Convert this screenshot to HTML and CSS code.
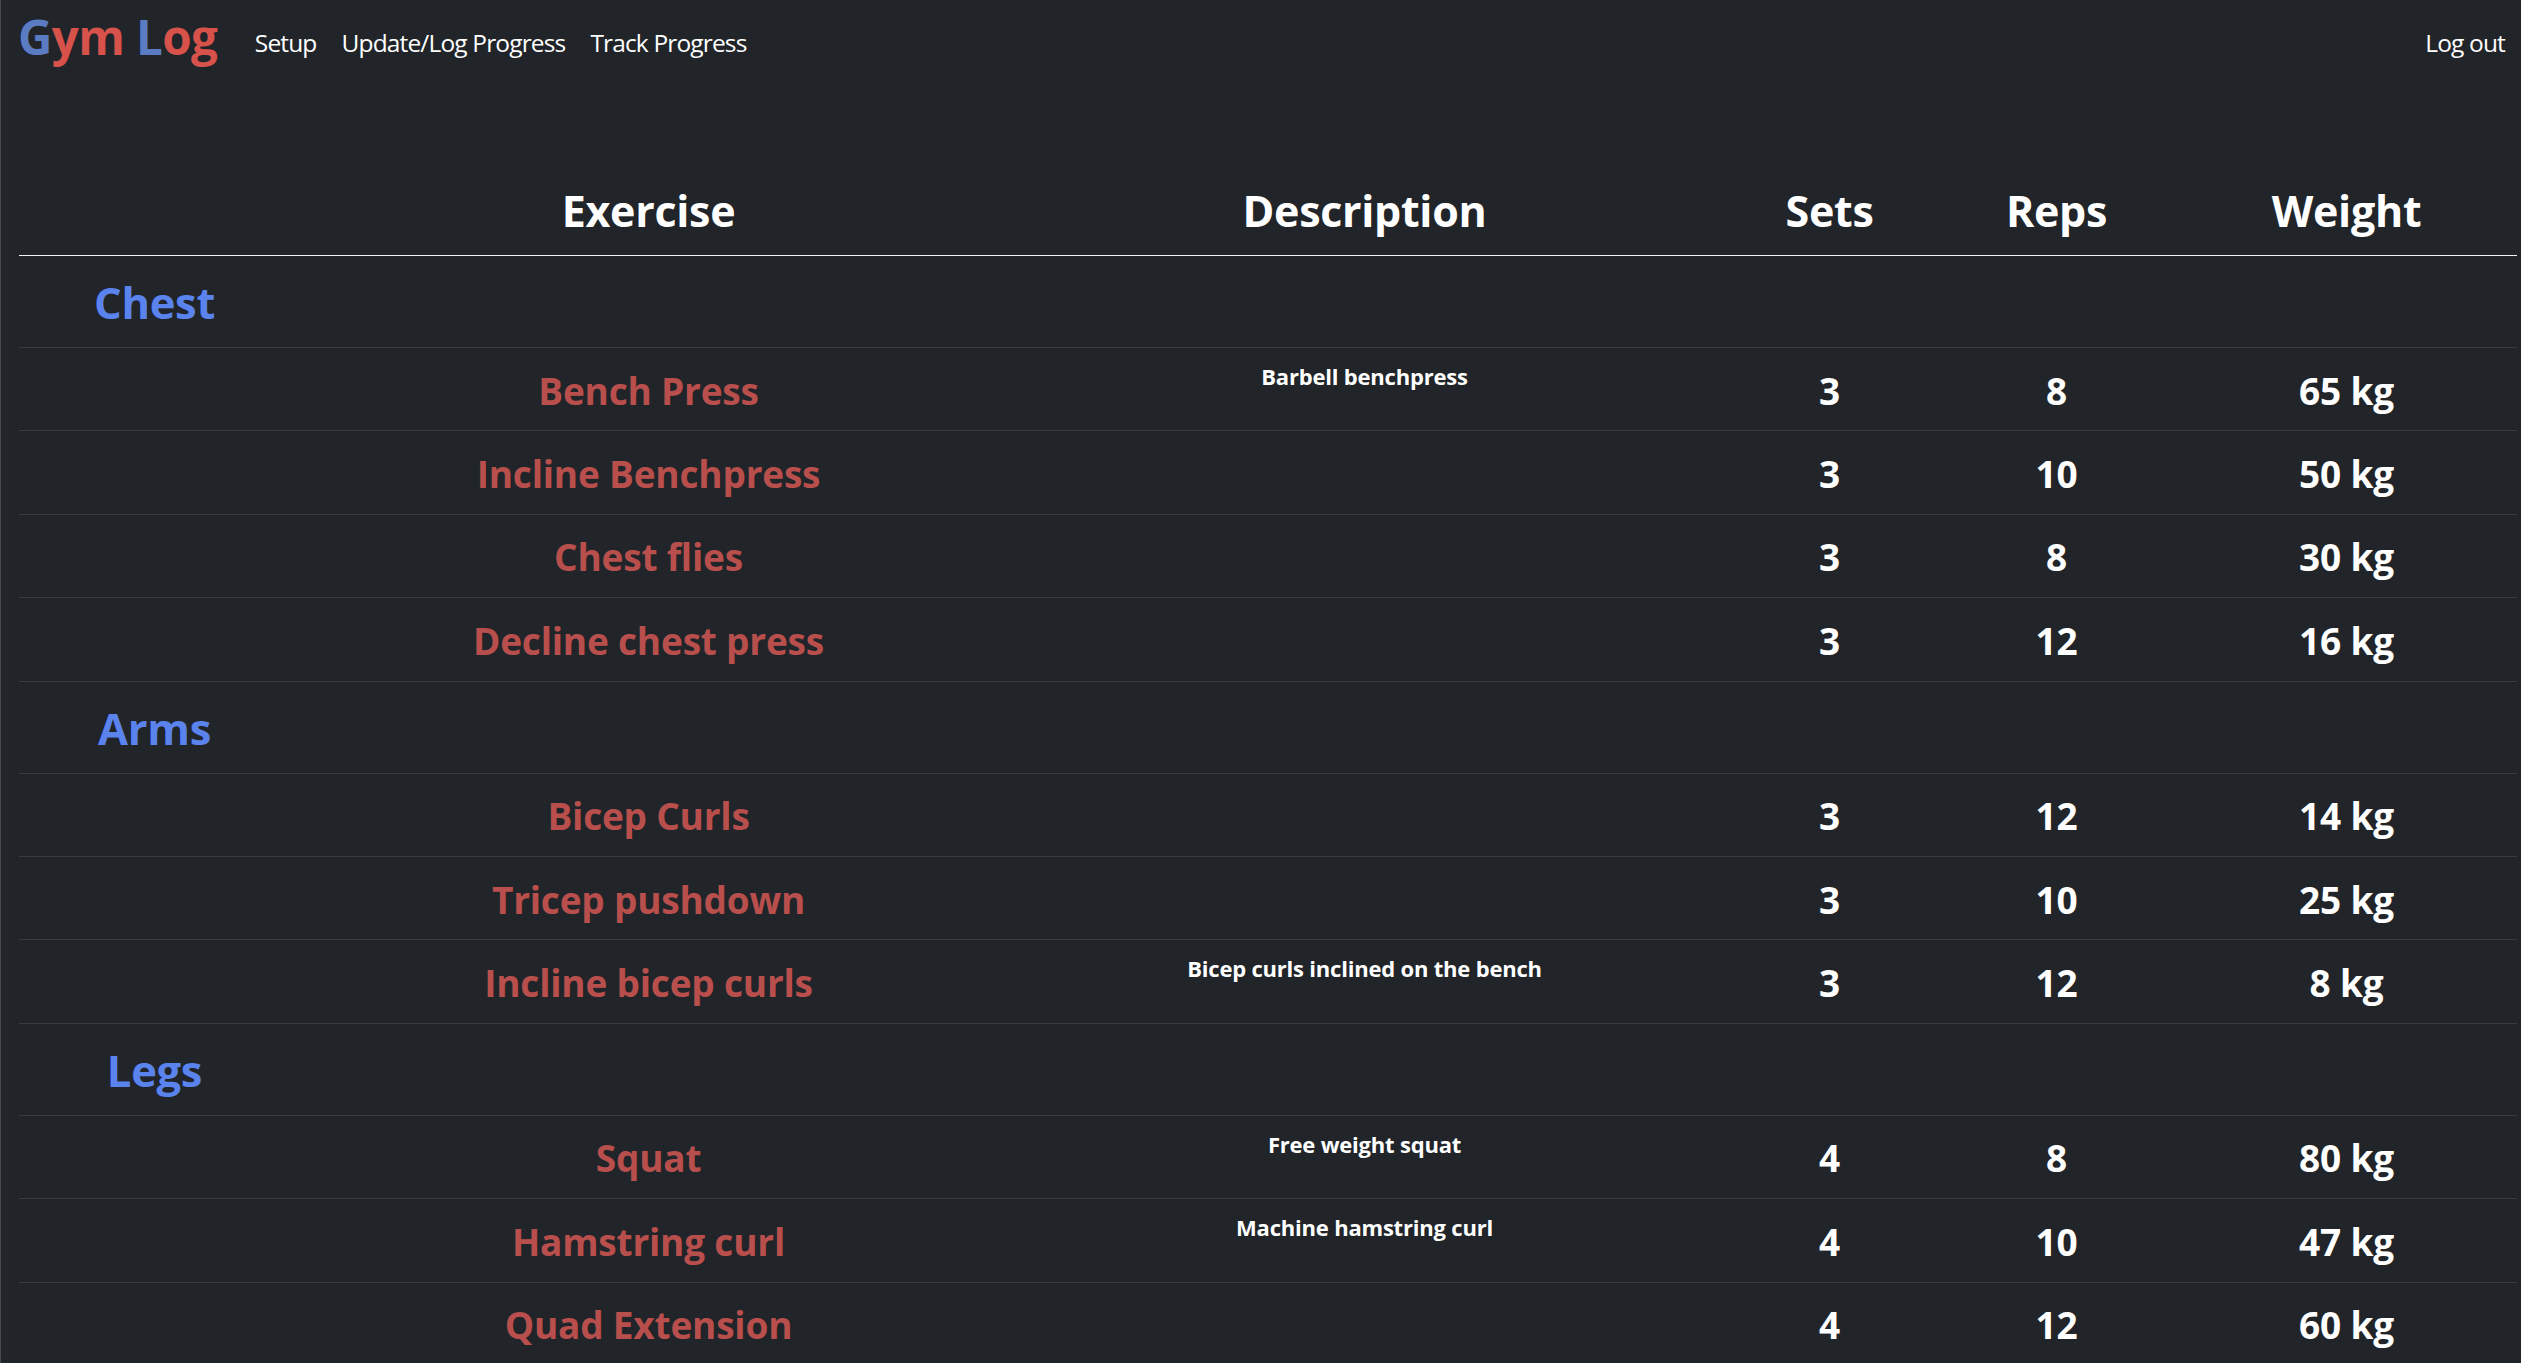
FILE: index.html
```html
<!DOCTYPE html>
<html lang="en">
<head>
<meta charset="utf-8">
<title>Gym Log</title>
<link rel="stylesheet" href="styles.css">
</head>
<body>
<div class="frame">
  <nav class="navbar">
    <a class="brand"><span class="blue">G</span><span class="red">ym</span> <span class="blue">L</span><span class="red">og</span></a>
    <ul class="links">
      <li><a class="link">Setup</a></li>
      <li><a class="link">Update/Log Progress</a></li>
      <li><a class="link">Track Progress</a></li>
    </ul>
    <a class="link logout">Log out</a>
  </nav>

  <main class="content">
    <table class="log">
      <colgroup>
        <col class="c-group"><col class="c-ex"><col class="c-desc"><col class="c-sets"><col class="c-reps"><col class="c-weight">
      </colgroup>
      <thead>
        <tr class="head"><th></th><th>Exercise</th><th>Description</th><th>Sets</th><th>Reps</th><th>Weight</th></tr>
      </thead>
      <tbody>
        <tr class="group"><th class="gname">Chest</th><td></td><td></td><td></td><td></td><td></td></tr>
        <tr class="item"><td></td><td class="ex">Bench Press</td><td class="desc">Barbell benchpress</td><td>3</td><td>8</td><td>65 kg</td></tr>
        <tr class="item"><td></td><td class="ex">Incline Benchpress</td><td class="desc"></td><td>3</td><td>10</td><td>50 kg</td></tr>
        <tr class="item"><td></td><td class="ex">Chest flies</td><td class="desc"></td><td>3</td><td>8</td><td>30 kg</td></tr>
        <tr class="item"><td></td><td class="ex">Decline chest press</td><td class="desc"></td><td>3</td><td>12</td><td>16 kg</td></tr>

        <tr class="group"><th class="gname">Arms</th><td></td><td></td><td></td><td></td><td></td></tr>
        <tr class="item"><td></td><td class="ex">Bicep Curls</td><td class="desc"></td><td>3</td><td>12</td><td>14 kg</td></tr>
        <tr class="item"><td></td><td class="ex">Tricep pushdown</td><td class="desc"></td><td>3</td><td>10</td><td>25 kg</td></tr>
        <tr class="item"><td></td><td class="ex">Incline bicep curls</td><td class="desc">Bicep curls inclined on the bench</td><td>3</td><td>12</td><td>8 kg</td></tr>

        <tr class="group"><th class="gname">Legs</th><td></td><td></td><td></td><td></td><td></td></tr>
        <tr class="item"><td></td><td class="ex">Squat</td><td class="desc">Free weight squat</td><td>4</td><td>8</td><td>80 kg</td></tr>
        <tr class="item"><td></td><td class="ex">Hamstring curl</td><td class="desc">Machine hamstring curl</td><td>4</td><td>10</td><td>47 kg</td></tr>
        <tr class="item"><td></td><td class="ex">Quad Extension</td><td class="desc"></td><td>4</td><td>12</td><td>60 kg</td></tr>
      </tbody>
    </table>
  </main>
</div>
</body>
</html>
```

FILE: styles.css
```css
html, body {
  margin: 0;
  padding: 0;
  background: #212529;
}

body {
  font-family: "Open Sans", "Noto Sans", "DejaVu Sans", sans-serif;
  color: #ffffff;
  overflow: hidden;
}

.frame {
  border-left: 1px solid #46494d;
  min-height: 100vh;
  box-sizing: border-box;
}

/* ---------- navbar ---------- */
.navbar {
  display: flex;
  align-items: flex-start;
  height: 90px;
  padding: 0 16px 0 17px;
}

.brand {
  font-size: 47.5px;
  font-weight: 700;
  line-height: 46px;
  margin-top: 14px;
  margin-right: 25px;
  white-space: nowrap;
  letter-spacing: -0.6px;
}

.brand .blue { color: #5b7cc2; }
.brand .red { color: #d6524b; }

.links {
  display: flex;
  list-style: none;
  margin: 0;
  padding: 0;
  flex: 1;
}

.link {
  display: block;
  font-size: 24.5px;
  line-height: 26px;
  margin-top: 30px;
  padding: 0 12.5px;
  color: #ffffff;
  white-space: nowrap;
  letter-spacing: -0.85px;
}

.logout {
  padding-right: 0;
}

/* ---------- table ---------- */
.content {
  padding: 73px 0 0 18px;
}

.log {
  width: 2498px;
  table-layout: fixed;
  border-collapse: separate;
  border-spacing: 0;
}

.c-group { width: 271px; }
.c-ex { width: 717px; }
.c-desc { width: 715px; }
.c-sets { width: 215px; }
.c-reps { width: 239px; }
.c-weight { width: 341px; }

.log th,
.log td {
  padding: 3px 0 0;
  text-align: center;
  vertical-align: middle;
  font-weight: 700;
  border-bottom: 1px solid #373b3e;
}

.head { height: 93px; }

.head th {
  font-size: 43px;
  line-height: 50px;
  color: #ffffff;
  letter-spacing: -0.3px;
  border-bottom: 1px solid #f2f2f2;
}

.group { height: 92px; }

.gname {
  font-size: 43.5px;
  line-height: 50px;
  color: #5a83ee;
  letter-spacing: -0.3px;
}

.item { height: 83.4px; }

.item td {
  font-size: 37px;
  line-height: 44px;
  color: #ffffff;
  letter-spacing: -0.2px;
}

.item td.ex {
  color: #b94f4c;
}

.item td.desc {
  vertical-align: top;
  font-size: 22px;
  line-height: 34px;
  padding-top: 11px;
  letter-spacing: -0.2px;
}
```
